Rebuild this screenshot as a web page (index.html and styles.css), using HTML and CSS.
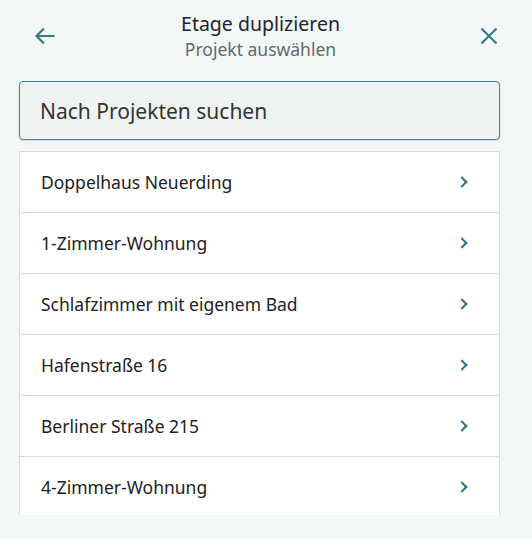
FILE: index.html
```html
<!DOCTYPE html>
<html lang="de">
<head>
    <meta charset="utf-8">
    <title>Etage duplizieren</title>
    <link rel="stylesheet" href="styles.css">
</head>
<body>
    <div class="dialog">
        <div class="header">
            <button class="icon-btn" type="button" aria-label="Zurück">
                <svg width="24" height="24" viewBox="0 0 24 24"><path d="M22.5 12H4.5M12 4.5L4.5 12L12 19.5" fill="none" stroke="#37798a" stroke-width="2.2"/></svg>
            </button>
            <div class="titles">
                <div class="title">Etage duplizieren</div>
                <div class="subtitle">Projekt auswählen</div>
            </div>
            <button class="icon-btn" type="button" aria-label="Schließen">
                <svg width="24" height="24" viewBox="0 0 24 24"><path d="M4.5 4.5L19.5 19.5M19.5 4.5L4.5 19.5" fill="none" stroke="#37798a" stroke-width="2.2"/></svg>
            </button>
        </div>

        <div class="search">Nach Projekten suchen</div>

        <ul class="projects">
            <li>Doppelhaus Neuerding <span class="chev"></span></li>
            <li>1-Zimmer-Wohnung <span class="chev"></span></li>
            <li>Schlafzimmer mit eigenem Bad <span class="chev"></span></li>
            <li>Hafenstraße 16 <span class="chev"></span></li>
            <li>Berliner Straße 215 <span class="chev"></span></li>
            <li>4-Zimmer-Wohnung <span class="chev"></span></li>
        </ul>
    </div>
</body>
</html>
```

FILE: styles.css
```css
html, body { margin: 0; height: 100%; }
body { background-color: #f4f7f8; font-family: "Noto Sans", "Open Sans", sans-serif; color: #222; overflow: hidden; }

.dialog { padding: 0 32px 0 19px; height: 515px; overflow: hidden; display: flex; flex-direction: column; }
.dialog > * { flex-shrink: 0; }

.header { display: flex; align-items: center; justify-content: space-between; height: 72px; padding: 0 0 0 13px; margin-right: -1px; box-sizing: border-box; }
.icon-btn { width: 24px; height: 24px; padding: 0; border: 0; background: none; cursor: pointer; display: flex; }
.titles { text-align: center; margin-top: -2px; margin-left: -12px; }
.title { font-size: 19.5px; line-height: 27px; color: #1f2426; }
.subtitle { font-size: 17.5px; line-height: 24px; color: #5f6a6d; }

.search { margin-top: 9px; height: 57px; border: 1px solid #3f8293; border-radius: 4px; background-color: #eff3f4; padding: 0 20px; display: flex; align-items: center; font-size: 21px; color: #333; box-shadow: 0 1px 2px rgba(0,0,0,0.12); }

.projects { list-style: none; margin: 11px 0 0 0; padding: 0; background-color: #fff; border: 1px solid #cfdfe3; border-bottom: 0; }
.projects li { height: 60px; border-bottom: 1px solid #cfdfe3; padding: 0 33px 0 21px; display: flex; align-items: center; justify-content: space-between; font-size: 17.5px; color: #222; }
.chev { width: 6px; height: 6px; border-top: 2px solid #2f7384; border-right: 2px solid #2f7384; transform: rotate(45deg); }
```
